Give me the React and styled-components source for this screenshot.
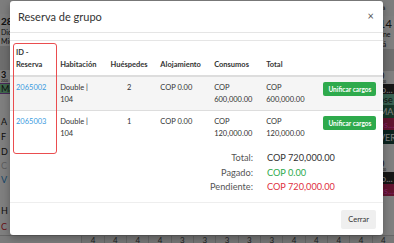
import React from 'react';
import styled, { createGlobalStyle } from 'styled-components';

const GlobalStyle = createGlobalStyle`
  html, body {
    margin: 0;
    padding: 0;
    background: #fff;
  }
  body {
    font-family: Lato, 'Noto Sans', sans-serif;
    color: #333;
  }
`;

const Page = styled.div`
  position: relative;
  width: 394px;
  height: 243px;
  overflow: hidden;
  display: flex;
  flex-direction: column;
  background: #fff;
`;

/* ---- calendar behind the dialog ---- */

const Main = styled.div`
  flex: 1;
  display: flex;
`;

const Pane = styled.div`
  width: ${p => p.width}px;
  display: flex;
  flex-direction: column;
  overflow: hidden;
  font-size: 9px;
  line-height: 1;
  white-space: nowrap;
`;

const Middle = styled.div`
  flex: 1;
`;

const Cell = styled.div`
  height: ${p => p.h}px;
  display: flex;
  align-items: center;
  padding-left: ${p => p.pad || 1}px;
  background: ${p => p.bg || 'transparent'};
  color: ${p => p.color || '#222'};
  font-size: ${p => p.size || 9}px;
  font-weight: ${p => (p.bold ? 700 : 400)};
  border-top: ${p => (p.edge ? `1.5px solid ${p.edge}` : 'none')};
  border-bottom: ${p => (p.edge ? `1.5px solid ${p.edge}` : 'none')};
  box-sizing: border-box;
  overflow: hidden;
`;

const BottomRow = styled.div`
  height: 8px;
  display: flex;
  background: #eee;
  border-top: 1px solid #ccc;
`;

const BottomGap = styled.div`
  width: 84px;
  background: #f8f8f8;
`;

const DayNum = styled.div`
  width: 22px;
  font-size: 8px;
  line-height: 9px;
  text-align: center;
  color: #444;
  border-left: 1px solid #ccc;
`;

/* ---- dialog ---- */

const Backdrop = styled.div`
  position: absolute;
  inset: 0;
  background: rgba(0, 0, 0, 0.5);
  display: flex;
  padding: 1px 11px 8px 10px;
`;

const Modal = styled.div`
  position: relative;
  flex: 1;
  background: #fff;
  border-radius: 3px;
  display: flex;
  flex-direction: column;
  box-shadow: 0 3px 9px rgba(0, 0, 0, 0.3);
`;

const Header = styled.div`
  height: 31px;
  display: flex;
  align-items: center;
  justify-content: space-between;
  padding: 0 9px 0 8px;
  border-bottom: 1px solid #e5e5e5;
`;

const Title = styled.div`
  font-size: 11px;
  color: #333;
`;

const Close = styled.div`
  font-size: 11px;
  color: #555;
  margin-top: -3px;
`;

const Body = styled.div`
  flex: 1;
  padding-top: 7px;
`;

const Table = styled.table`
  width: 100%;
  border-collapse: collapse;
  border-top: 1px solid #e5e5e5;
  font-size: 7.5px;
  line-height: 12px;
`;

const Th = styled.th`
  width: ${p => p.w}px;
  text-align: ${p => p.align || 'left'};
  vertical-align: bottom;
  font-weight: 700;
  color: #333;
  padding: 6px 6px 4px;
  border-bottom: 2px solid #ddd;
`;

const Row = styled.tr`
  background: ${p => (p.striped ? '#f5f5f5' : '#fff')};
  & + & {
    border-top: 1px solid #ddd;
  }
`;

const Td = styled.td`
  text-align: ${p => p.align || 'left'};
  vertical-align: top;
  padding: 5px 6px 4px;
  color: #333;
`;

const IdLink = styled.a`
  color: #3a9be0;
  text-decoration: none;
`;

const MergeButton = styled.button`
  border: none;
  border-radius: 2px;
  background: #2eaa4c;
  color: #fff;
  font-family: inherit;
  font-size: 6.5px;
  font-weight: 700;
  height: 14px;
  padding: 0 5px;
  margin-left: 5px;
  white-space: nowrap;
`;

const Summary = styled.div`
  display: grid;
  grid-template-columns: 243px auto;
  column-gap: 14px;
  row-gap: 2px;
  margin-top: 8px;
  font-size: 9.2px;
  line-height: 12.5px;
`;

const Label = styled.div`
  text-align: right;
  color: #555;
`;

const Amount = styled.div`
  color: ${p => p.color || '#333'};
`;

const Footer = styled.div`
  height: 32px;
  display: flex;
  align-items: center;
  justify-content: flex-end;
  padding: 0 7px;
  border-top: 1px solid #eee;
`;

const CloseButton = styled.button`
  border: none;
  border-radius: 2px;
  background: #efefef;
  color: #333;
  font-family: inherit;
  font-size: 7.5px;
  height: 19px;
  padding: 0 7px;
`;

const Highlight = styled.div`
  position: absolute;
  left: 3px;
  top: 42px;
  width: 44px;
  height: 111px;
  border: 1.5px solid #ea4d4f;
  border-radius: 3px;
  box-sizing: border-box;
  pointer-events: none;
`;

const leftCells = [
  { h: 14, bg: '#fafafa', text: '' },
  { h: 14, text: '28', size: 10, bold: true },
  { h: 8, text: 'Dic', size: 7 },
  { h: 10, text: 'Mié', size: 7 },
  { h: 24, bg: '#ddd', text: '' },
  { h: 9, text: '3', size: 9, bold: true },
  { h: 4, text: '2000', size: 3 },
  { h: 11, text: 'Mat', bg: '#7ed09a', edge: '#9050b0' },
  { h: 20, text: '' },
  { h: 15, text: 'A' },
  { h: 15, text: 'F' },
  { h: 15, text: 'D' },
  { h: 13, text: 'C', color: '#bbb' },
  { h: 14, text: 'V', color: '#2a8ccf' },
  { h: 16, text: '' },
  { h: 16, text: 'H' },
  { h: 17, text: 'C', color: '#d0202e' },
];

const rightCells = [
  { h: 16, bg: '#fafafa', text: 'Sá', size: 6 },
  { h: 14, text: '14', size: 11 },
  { h: 9, text: 'Ene', size: 7 },
  { h: 10, text: 'Sá', size: 7 },
  { h: 22, bg: '#ddd', text: '' },
  { h: 9, text: '0', size: 9 },
  { h: 4, text: '0000', size: 3 },
  { h: 10, text: 'lo...', bg: '#2c2c2c', color: '#fff' },
  { h: 11, text: 'ose', bg: '#6fc0a0' },
  { h: 13, text: 'MAR', bg: '#2c6b4e', color: '#fff' },
  { h: 12, text: 'os...', bg: '#c2285c', color: '#f4c' },
  { h: 14, text: 'VER', bg: '#17463c', color: '#fff' },
  { h: 15, text: '' },
  { h: 9, text: '0', size: 9 },
  { h: 4, text: '0000', size: 3 },
  { h: 12, text: 'lo...', bg: '#2c2c2c', color: '#fff' },
  { h: 12, text: 'os...', bg: '#c2285c', color: '#f4c' },
  { h: 10, text: '' },
];

const bottomDays = [4, 4, 4, 4, 3, 3, 3, 3, 3, 4, 4, 4, 4, 4];

const reservations = [
  { id: '2065002', room: ['Double |', '104'], guests: 2, stay: 'COP 0.00', extras: ['COP', '600,000.00'], total: ['COP', '600,000.00'] },
  { id: '2065003', room: ['Double |', '104'], guests: 1, stay: 'COP 0.00', extras: ['COP', '120,000.00'], total: ['COP', '120,000.00'] },
];

const Lines = ({ lines }) => (
  <>
    {lines[0]}
    <br />
    {lines[1]}
  </>
);

export default function App() {
  return (
    <Page>
      <GlobalStyle />
      <Main>
        <Pane width={60}>
          {leftCells.map((c, i) => (
            <Cell key={i} h={c.h} bg={c.bg} color={c.color} size={c.size} bold={c.bold} edge={c.edge}>
              {c.text}
            </Cell>
          ))}
        </Pane>
        <Middle />
        <Pane width={18}>
          {rightCells.map((c, i) => (
            <Cell key={i} h={c.h} bg={c.bg} color={c.color} size={c.size} pad={3}>
              {c.text}
            </Cell>
          ))}
        </Pane>
      </Main>
      <BottomRow>
        <BottomGap />
        {bottomDays.map((d, i) => (
          <DayNum key={i}>{d}</DayNum>
        ))}
      </BottomRow>

      <Backdrop>
        <Modal>
          <Header>
            <Title>Reserva de grupo</Title>
            <Close>×</Close>
          </Header>
          <Body>
            <Table>
              <thead>
                <tr>
                  <Th w={46}>ID -<br />Reserva</Th>
                  <Th w={50}>Habitación</Th>
                  <Th w={50} align="center">Huéspedes</Th>
                  <Th w={52}>Alojamiento</Th>
                  <Th w={55}>Consumos</Th>
                  <Th w={56}>Total</Th>
                  <Th w={63}></Th>
                </tr>
              </thead>
              <tbody>
                {reservations.map((r, i) => (
                  <Row key={r.id} striped={i % 2 === 0}>
                    <Td><IdLink href="#">{r.id}</IdLink></Td>
                    <Td><Lines lines={r.room} /></Td>
                    <Td align="center">{r.guests}</Td>
                    <Td>{r.stay}</Td>
                    <Td><Lines lines={r.extras} /></Td>
                    <Td><Lines lines={r.total} /></Td>
                    <Td><MergeButton>Unificar cargos</MergeButton></Td>
                  </Row>
                ))}
              </tbody>
            </Table>
            <Summary>
              <Label>Total:</Label>
              <Amount>COP 720,000.00</Amount>
              <Label>Pagado:</Label>
              <Amount color="#2eaa4c">COP 0.00</Amount>
              <Label>Pendiente:</Label>
              <Amount color="#e0303e">COP 720,000.00</Amount>
            </Summary>
          </Body>
          <Footer>
            <CloseButton>Cerrar</CloseButton>
          </Footer>
          <Highlight />
        </Modal>
      </Backdrop>
    </Page>
  );
}
